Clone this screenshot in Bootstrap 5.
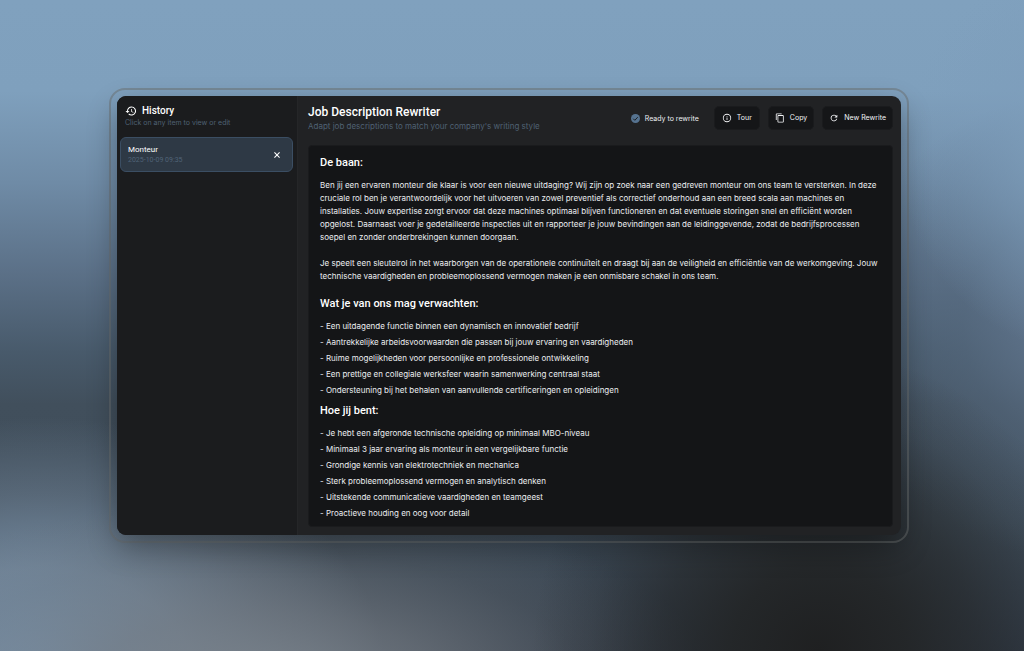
<!DOCTYPE html>
<html lang="en">
<head>
<meta charset="utf-8">
<meta name="viewport" content="width=device-width, initial-scale=1">
<title>Job Description Rewriter</title>
<link href="https://cdn.jsdelivr.net/npm/bootstrap@5.3.0/dist/css/bootstrap.min.css" rel="stylesheet">
<style>
body{font-family:Inter,Roboto,sans-serif;font-size:8px;line-height:13px;color:#eceef1;padding:88px 115px 109px 109px;
background:
radial-gradient(ellipse 28% 46% at 80% 100%,#1f2021 0,#222425e6 30%,#22242599 55%,#22242533 80%,#22242500 100%),
radial-gradient(ellipse 44% 30% at 26% 106%,#7a838c 0,#737a82b3 40%,#6a70764d 72%,#666c7300 100%),
radial-gradient(ellipse 34% 42% at 4% 106%,#7fa0c0 0,#7b92a9d9 45%,#70829580 72%,#6a7b8f00 100%),
radial-gradient(ellipse 18% 30% at 106% 24%,#80a1be 0,#7d9dbb99 50%,#7d9dbb00 100%),
radial-gradient(ellipse 24% 36% at 106% 50%,#647992 0,#566a8099 50%,#4a5c6e00 100%),
linear-gradient(180deg,#80a1be 0,#7fa0bd 14%,#6f8ba6 28%,#5b7087 42%,#485a6b 54%,#414f5c 62%,#3f4d5a 80%,#323c49 100%) #323c49}
.frame{padding:6px;border:2px solid #6c706f80;border-radius:16px}
.app-window{border-radius:9px;background:#212224;box-shadow:0 12px 30px #00000052}
.history-pane{width:181px;background:#1b1c1e;padding:8px 4px 8px 3px;border-right:1px solid #252628}
.history-head{padding:0 5px}
.sub-text{line-height:12px;color:#4f6173}
.history-head .sub-text{font-size:7px;line-height:10px}
.pane-title,.page-title,.doc-panel h2{font-family:Roboto,sans-serif;font-weight:500;color:#fff}
.pane-title{font-size:10px;line-height:14px;gap:5px}
.page-title{font-size:12px;line-height:16px}
.history-item{background:#2e3945;border:1px solid #3b4e63;border-radius:6px;padding:6px 8px 6px 7px;margin-top:9px}
.history-name{font-family:Roboto,sans-serif;line-height:12px;color:#fff}
.stamp{font-family:Roboto,sans-serif;font-size:7px;line-height:9px;color:#506377}
.close-btn{border:0;background:none;color:#fff;padding:4px;line-height:0}
.main-pane{padding:8px 8px 8px 10px;min-width:0}
.top-bar{margin-bottom:13px}
.status{font-size:7px;gap:5px;margin-right:7px}
.tool-btn{background:#151618;border:1px solid #1a1b1d;border-radius:5px;color:#f2f3f5;font-size:7px;line-height:14px;padding:4px 6px;gap:5px;min-width:46px}
.tool-btn:hover{background:#1c1e21;color:#fff}
.doc-panel{background:#141517;border:1px solid #1a1b1d;border-radius:4px;padding:9px 10px 5px 11px}
.doc-panel h2{font-size:11px;line-height:15px;margin:0 0 7px}
.doc-panel h2:first-child{margin-bottom:9px}
.doc-panel p{margin:0 0 13px}
.doc-panel ul{margin:0 0 5px}
.doc-panel ul:last-child{margin:0}
.doc-panel li{line-height:16px}
</style>
</head>
<body class="min-vh-100">
<div class="frame">
<div class="app-window d-flex overflow-hidden">
<aside class="history-pane flex-shrink-0">
<div class="history-head">
<h2 class="pane-title d-flex align-items-center m-0">
<svg width="12" height="12" viewBox="0 0 24 24" fill="currentColor" aria-hidden="true"><path d="M13 3a9 9 0 0 0-9 9H1l3.900 3.900.1.140L9 12H6a7 7 0 1 1 2.060 4.940l-1.420 1.420A9 9 0 1 0 13 3zm-1 5v5l4.280 2.540.72-1.210-3.500-2.080V8z"/></svg>
History</h2>
<div class="sub-text">Click on any item to view or edit</div>
</div>
<div class="history-item d-flex align-items-center justify-content-between">
<div><div class="history-name">Monteur</div><div class="stamp">2025-10-09 09:35</div></div>
<button type="button" class="close-btn" aria-label="Remove Monteur"><svg width="6" height="6" viewBox="0 0 14 14" stroke="currentColor" stroke-width="2.500" aria-hidden="true"><path d="M1 1l12 12M13 1L1 13"/></svg></button>
</div>
</aside>
<main class="main-pane flex-grow-1">
<header class="top-bar d-flex justify-content-between align-items-center">
<div>
<h1 class="page-title m-0">Job Description Rewriter</h1>
<div class="sub-text">Adapt job descriptions to match your company's writing style</div>
</div>
<div class="d-flex align-items-center gap-2">
<div class="status d-flex align-items-center">
<svg width="9" height="9" viewBox="0 0 20 20" aria-hidden="true"><circle cx="10" cy="10" r="10" fill="#567390"/><path d="M5 10.500l3.500 3.500L15 7" fill="none" stroke="#1c1e21" stroke-width="2.200"/></svg>
<span>Ready to rewrite</span>
</div>
<button type="button" class="btn tool-btn d-flex align-items-center justify-content-center">
<svg width="10" height="10" viewBox="0 0 24 24" fill="currentColor" aria-hidden="true"><path d="M11 7h2v2h-2zm0 4h2v6h-2zm1-9a10 10 0 1 0 0 20 10 10 0 0 0 0-20zm0 18a8 8 0 1 1 0-16 8 8 0 0 1 0 16z"/></svg>Tour</button>
<button type="button" class="btn tool-btn d-flex align-items-center justify-content-center">
<svg width="10" height="10" viewBox="0 0 24 24" fill="currentColor" aria-hidden="true"><path d="M16 1H4a2 2 0 0 0-2 2v14h2V3h12zm3 4H8a2 2 0 0 0-2 2v14a2 2 0 0 0 2 2h11a2 2 0 0 0 2-2V7a2 2 0 0 0-2-2zm0 16H8V7h11z"/></svg>Copy</button>
<button type="button" class="btn tool-btn d-flex align-items-center justify-content-center">
<svg width="10" height="10" viewBox="0 0 24 24" fill="currentColor" aria-hidden="true"><path d="M17.650 6.350A8 8 0 1 0 19.730 14h-2.080A6 6 0 1 1 12 6c1.660 0 3.140.69 4.220 1.780L13 11h7V4z"/></svg>New Rewrite</button>
</div>
</header>
<article class="doc-panel" lang="nl">
<h2>De baan:</h2>
<p>Ben jij een ervaren monteur die klaar is voor een nieuwe uitdaging? Wij zijn op zoek naar een gedreven monteur om ons team te versterken. In deze cruciale rol ben je verantwoordelijk voor het uitvoeren van zowel preventief als correctief onderhoud aan een breed scala aan machines en installaties. Jouw expertise zorgt ervoor dat deze machines optimaal blijven functioneren en dat eventuele storingen snel en efficiënt worden opgelost. Daarnaast voer je gedetailleerde inspecties uit en rapporteer je jouw bevindingen aan de leidinggevende, zodat de bedrijfsprocessen soepel en zonder onderbrekingen kunnen doorgaan.</p>
<p>Je speelt een sleutelrol in het waarborgen van de operationele continuïteit en draagt bij aan de veiligheid en efficiëntie van de werkomgeving. Jouw technische vaardigheden en probleemoplossend vermogen maken je een onmisbare schakel in ons team.</p>
<h2>Wat je van ons mag verwachten:</h2>
<ul class="list-unstyled">
<li>- Een uitdagende functie binnen een dynamisch en innovatief bedrijf</li>
<li>- Aantrekkelijke arbeidsvoorwaarden die passen bij jouw ervaring en vaardigheden</li>
<li>- Ruime mogelijkheden voor persoonlijke en professionele ontwikkeling</li>
<li>- Een prettige en collegiale werksfeer waarin samenwerking centraal staat</li>
<li>- Ondersteuning bij het behalen van aanvullende certificeringen en opleidingen</li>
</ul>
<h2>Hoe jij bent:</h2>
<ul class="list-unstyled">
<li>- Je hebt een afgeronde technische opleiding op minimaal MBO-niveau</li>
<li>- Minimaal 3 jaar ervaring als monteur in een vergelijkbare functie</li>
<li>- Grondige kennis van elektrotechniek en mechanica</li>
<li>- Sterk probleemoplossend vermogen en analytisch denken</li>
<li>- Uitstekende communicatieve vaardigheden en teamgeest</li>
<li>- Proactieve houding en oog voor detail</li>
</ul>
</article>
</main>
</div>
</div>
<script src="https://cdn.jsdelivr.net/npm/bootstrap@5.3.0/dist/js/bootstrap.bundle.min.js"></script>
</body>
</html>
